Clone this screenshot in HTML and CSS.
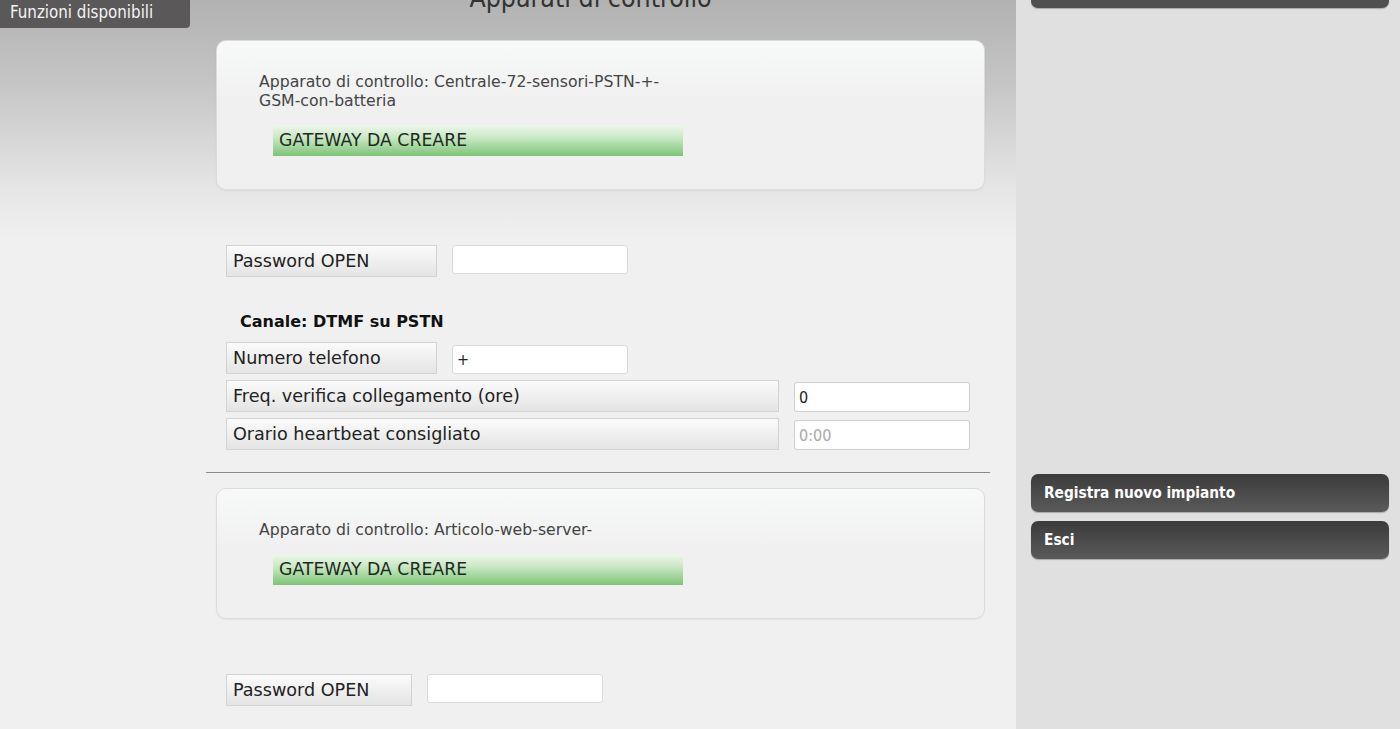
FILE: index.html
```html
<!DOCTYPE html>
<html lang="it">
<head>
<meta charset="utf-8">
<title>Apparati di controllo</title>
<link rel="stylesheet" href="styles.css">
</head>
<body>
<div class="page">
  <main class="main">
    <div class="tab">Funzioni disponibili</div>
    <div class="content">
      <h2 class="title">Apparati di controllo</h2>

      <section class="card">
        <p class="device">Apparato di controllo: Centrale-72-sensori-PSTN-+-GSM-con-batteria</p>
        <div class="gateway">GATEWAY DA CREARE</div>
      </section>

      <div class="fields">
        <div class="row row-password">
          <div class="label label-short">Password OPEN</div>
          <input class="input input-short" type="text">
        </div>

        <h3 class="channel">Canale: DTMF su PSTN</h3>

        <div class="row">
          <div class="label label-short">Numero telefono</div>
          <input class="input input-short input-low" type="text" value="+">
        </div>
        <div class="row row-tight">
          <div class="label label-long">Freq. verifica collegamento (ore)</div>
          <input class="input input-long" type="text" value="0">
        </div>
        <div class="row row-tight">
          <div class="label label-long">Orario heartbeat consigliato</div>
          <input class="input input-long" type="text" placeholder="0:00">
        </div>
      </div>

      <hr class="divider">

      <section class="card">
        <p class="device">Apparato di controllo: Articolo-web-server-</p>
        <div class="gateway">GATEWAY DA CREARE</div>
      </section>

      <div class="fields">
        <div class="row row-password">
          <div class="label label-mid">Password OPEN</div>
          <input class="input input-short" type="text">
        </div>
      </div>
    </div>
  </main>

  <aside class="sidebar">
    <a class="side-btn side-btn-top" href="#">&nbsp;</a>
    <nav class="side-nav">
      <a class="side-btn" href="#">Registra nuovo impianto</a>
      <a class="side-btn" href="#">Esci</a>
    </nav>
  </aside>
</div>
</body>
</html>
```

FILE: styles.css
```css
html, body {
  margin: 0;
  padding: 0;
}

body {
  font-family: "DejaVu Sans", sans-serif;
  color: #333;
  background: #f0f0f0;
  overflow: hidden;
}

.page {
  display: flex;
  min-height: 729px;
}

.main {
  position: relative;
  width: 1016px;
  flex: none;
  background: linear-gradient(#b2b2b2 0px, #c4c4c4 80px, #e6e6e6 190px, #f0f0f0 240px) no-repeat, #f0f0f0;
}

.tab {
  position: absolute;
  top: 0;
  left: 0;
  width: 180px;
  height: 28px;
  padding-left: 10px;
  box-sizing: content-box;
  background: #5a5858;
  color: #f4f4f4;
  font-family: "DejaVu Sans Condensed", "DejaVu Sans", sans-serif;
  font-size: 16.8px;
  line-height: 24px;
  border-bottom-right-radius: 4px;
  z-index: 2;
}

.content {
  padding-left: 216px;
  width: 769px;
}

.title {
  margin: -17px 20px 0 0;
  font-family: "DejaVu Sans Condensed", "DejaVu Sans", sans-serif;
  font-size: 26.5px;
  line-height: 29px;
  font-weight: normal;
  text-align: center;
  color: #333;
  height: 29px;
}

.card {
  margin-top: 28px;
  box-sizing: border-box;
  width: 769px;
  padding: 31px 0 33px 42px;
  border: 1px solid #dcdcdc;
  border-radius: 10px;
  background: linear-gradient(#f8f9f9, #f0f0f0 60px);
  box-shadow: 0 1px 2px rgba(0, 0, 0, 0.06);
}

.device {
  margin: 0;
  width: 420px;
  font-size: 15.7px;
  line-height: 19px;
  color: #444;
}

.gateway {
  margin: 15px 0 0 14px;
  width: 404px;
  height: 31px;
  padding-left: 6px;
  line-height: 31px;
  font-size: 17.3px;
  color: #1e2a1e;
  background: linear-gradient(#eef8ec, #c4e6bf 45%, #7cc477);
}

.fields {
  padding-left: 10px;
}

.row {
  display: flex;
  align-items: flex-start;
  gap: 15px;
  margin-top: 6px;
}

.row-password {
  margin-top: 55px;
}

.label {
  box-sizing: border-box;
  height: 32px;
  padding-left: 6px;
  line-height: 30px;
  font-size: 17.6px;
  color: #222;
  border: 1px solid #d2d2d2;
  background: linear-gradient(#fbfbfb, #e4e4e4);
  white-space: nowrap;
}

.label-short { width: 211px; }
.label-mid { width: 186px; }
.label-long { width: 553px; }

.input {
  box-sizing: border-box;
  height: 29px;
  margin: 0;
  padding: 0 4px;
  border: 1px solid #dadada;
  border-radius: 3px;
  background: #fff;
  font-family: "DejaVu Sans Condensed", "DejaVu Sans", sans-serif;
  font-size: 16px;
  color: #222;
  outline: none;
}

.input::placeholder {
  color: #aaa;
}

.input-short { width: 176px; }
.input-low { margin-top: 3px; }
.input-long { width: 176px; margin-top: 2px; height: 30px; }

.row-tight .input { border-color: #cfcfcf; }

.channel {
  margin: 35px 0 0 14px;
  height: 20px;
  font-size: 16px;
  line-height: 20px;
  font-weight: bold;
  color: #111;
}

.channel + .row {
  margin-top: 10px;
}

.divider {
  margin: 22px 0 0 -10px;
  width: 784px;
  border: 0;
  border-top: 1px solid #8a8a8a;
  height: 0;
}

.divider + .card {
  margin-top: 15px;
}

.sidebar {
  flex: 1;
  background: #e0e0e0;
  padding: 0 11px 0 15px;
}

.side-btn {
  display: block;
  box-sizing: border-box;
  height: 38px;
  padding-left: 13px;
  line-height: 38px;
  border-radius: 7px;
  background: linear-gradient(#3b3b3b, #5a5a5a);
  color: #fff;
  font-family: "DejaVu Sans Condensed", "DejaVu Sans", sans-serif;
  font-size: 15.3px;
  font-weight: bold;
  text-decoration: none;
  box-shadow: 0 1px 1px rgba(0, 0, 0, 0.25);
}

.side-btn-top {
  margin-top: -30px;
  background: #4f4f4f;
}

.side-nav {
  display: flex;
  flex-direction: column;
  gap: 9px;
  margin-top: 466px;
}
```
